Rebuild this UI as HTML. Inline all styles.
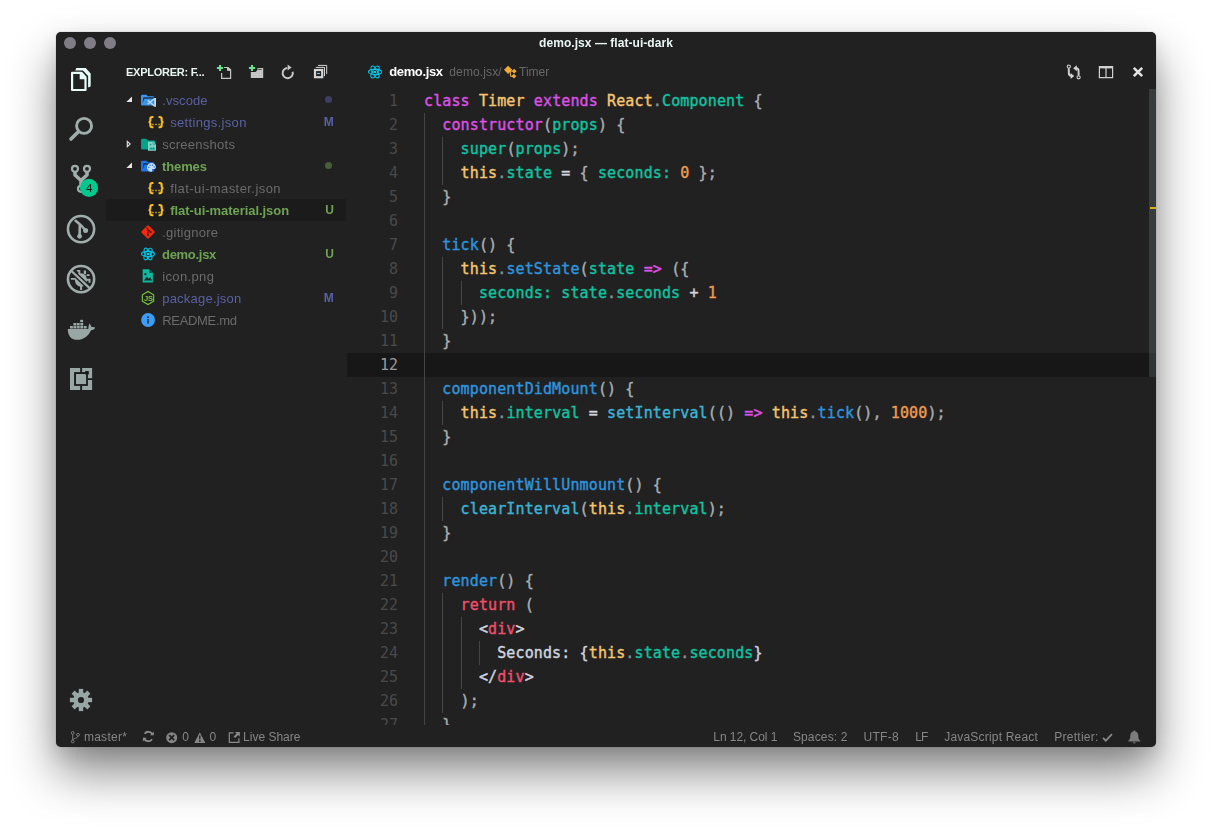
<!DOCTYPE html>
<html lang="en">
<head>
<meta charset="utf-8">
<title>demo.jsx — flat-ui-dark</title>
<style>
*{box-sizing:border-box;margin:0;padding:0}
html,body{width:1212px;height:827px;background:#fff;overflow:hidden}
body{font-family:"Liberation Sans",sans-serif;font-size:13px;color:#ccc;position:relative}
#win{position:absolute;left:56px;top:32px;width:1100px;height:714.5px;background:#212121;border-radius:5px;
 box-shadow:0 0 1px rgba(0,0,0,.5),0 26px 48px rgba(0,0,0,.46),0 8px 18px rgba(0,0,0,.10);overflow:hidden}
.abs{position:absolute}
#title,#act,#side,#tabs,#status{will-change:transform}
#code{background:#212121}
/* title bar */
#title{position:absolute;left:0;top:0;width:1100px;height:22px;text-align:center;line-height:23px;color:#e9f6f3;font-weight:bold;font-size:12px;letter-spacing:.05px}
.tl{position:absolute;top:5px;width:12px;height:12px;border-radius:50%;background:#807d86}
/* activity bar */
#act{position:absolute;left:0;top:22px;width:50px;height:670px}
#act svg{position:absolute}
/* sidebar */
#side{position:absolute;left:50px;top:22px;width:240px;height:670px}
#shead{position:absolute;left:20px;top:8px;height:20px;line-height:20px;font-size:11px;font-weight:bold;color:#e8f4f2;letter-spacing:-.26px}
.row{position:absolute;left:0;width:240px;height:22px;line-height:22px;font-size:13px;color:#6b6b6b;white-space:nowrap}
.row.sel{background:#1b1b1b}
.row .lbl{position:absolute;top:1px}
.row .st{position:absolute;right:12.5px;top:-.5px;font-size:12px;font-weight:bold;text-align:right;letter-spacing:-.3px}
.row svg{position:absolute}
.dot{position:absolute;left:219px;top:6.5px;width:7px;height:7px;border-radius:50%}
.mod{color:#5961a2}.unt{color:#6fa354}.ign{color:#6b6b6b}
/* editor */
#ed{position:absolute;left:291px;top:22px;width:809px;height:671px;overflow:hidden}
#tabs{position:absolute;left:0;top:0;width:809px;height:35px}
#code{position:absolute;left:0;top:35px;width:809px;height:636px;overflow:hidden;font-family:"DejaVu Sans Mono","Liberation Mono",monospace;font-size:15px}
.ln{position:absolute;left:0;width:809px;height:24px;line-height:24px;white-space:pre}
.ln .n{position:absolute;left:0;top:0;width:51px;text-align:right;color:#4a4a4a}
.ln .c{position:absolute;left:77px;top:0;color:#a9afb2;letter-spacing:.12px;-webkit-text-stroke:.4px}
.ln.cur{background:#171717}
.ln.cur .n{color:#9a9a9a}
.d{color:#87939a}.k{color:#dd50e6}.y{color:#f5c56e}.g{color:#10c3a0}.b{color:#2e94de}.cy{color:#3cb3d6}.o{color:#ee9a50}.r{color:#ee4f6a}.w{color:#d0d5de}
.gd{position:absolute;width:1px;background:#454545}
/* status */
#status{position:absolute;left:0;top:694px;width:1100px;height:22px;line-height:22px;font-size:12px;color:#868686;white-space:nowrap}
#status span{position:absolute;top:0}
#status svg{position:absolute}
</style>
</head>
<body>
<div id="win">
  <div id="title">demo.jsx — flat-ui-dark
    <div class="tl" style="left:8px"></div><div class="tl" style="left:28px"></div><div class="tl" style="left:48px"></div>
  </div>
  <div id="act">
<svg style="left:5px;top:5px" width="40" height="40" viewBox="0 0 40 40"><path d="M14.3 11.4 L15.3 9 H24.7 L29.7 14.4 V26.4 Q29.7 28.2 27.8 28.2 H27.1 V16.9 L21.9 11.4 Z" fill="#e6fbf8"/><path d="M12.2 13.8 H20.4 L24.5 18.2 V31 H11.1 V13.8 Z" fill="none" stroke="#e6fbf8" stroke-width="2.2" stroke-linejoin="round"/><path d="M18.7 14 H20.4 L24.5 18.2 V20.3 H18.7Z" fill="#e6fbf8"/></svg>
<svg style="left:5px;top:55px" width="40" height="40" viewBox="0 0 40 40"><circle cx="23.1" cy="16.9" r="7.5" fill="none" stroke="#9fadab" stroke-width="2.9"/><path d="M17.6 22.4 L10 30" stroke="#9fadab" stroke-width="3.6" stroke-linecap="round"/></svg>
<svg style="left:5px;top:105px" width="40" height="40" viewBox="0 0 40 40"><g fill="none" stroke="#9fadab"><circle cx="14" cy="9.800" r="3" stroke-width="2.200"/><circle cx="26" cy="9.800" r="3" stroke-width="2.200"/><circle cx="20" cy="29.800" r="3" stroke-width="2.200"/><path d="M14 13 V16 L20 21.5 L26 16 V13 M20 21 V27" stroke-width="3.6" stroke-linejoin="round"/></g><circle cx="28.05" cy="28.9" r="9.1" fill="#00c98d"/><text x="28.1" y="32.9" font-family="Liberation Sans, sans-serif" font-size="11.5" fill="#101010" text-anchor="middle">4</text></svg>
<svg style="left:5px;top:155px" width="40" height="40" viewBox="0 0 40 40"><circle cx="20.05" cy="20.1" r="13.1" fill="none" stroke="#9fadab" stroke-width="2.6"/><path d="M14.6 11.8 L18.8 15.2 L18.6 27" fill="none" stroke="#9fadab" stroke-width="2.6" stroke-linecap="round" stroke-linejoin="round"/><path d="M19.4 15.6 L24.3 21" stroke="#9fadab" stroke-width="2.4"/><circle cx="18.6" cy="27.3" r="2.4" fill="#9fadab"/><circle cx="24.6" cy="21.6" r="2.5" fill="#9fadab"/></svg>
<svg style="left:5px;top:205px" width="40" height="40" viewBox="0 0 40 40"><g fill="#9fadab"><ellipse cx="20" cy="21" rx="6.1" ry="6.7"/><path d="M17.3 10.9h2v4.5h-2zM15.8 10.9h2v1.6h-2zM22.8 11.6h2.2v3.6h-2.2zM9.9 19.1h6v1.7h-6zM24.2 19.8h5.3v2h-5.3zM27.6 21h1.9v2.8h-1.9zM25.6 15.2h3v1.7h-3zM19.1 26h2v5h-2z"/></g><path d="M10.2 11.8 L28.6 29.1" stroke="#212121" stroke-width="5"/><path d="M10.2 11.8 L28.6 29.1" stroke="#9fadab" stroke-width="2.2"/><circle cx="20.05" cy="20.1" r="13.1" fill="none" stroke="#9fadab" stroke-width="2.6"/></svg>
<svg style="left:5px;top:255px" width="40" height="40" viewBox="0 0 40 40"><g fill="#98a6a4"><path d="M6.8 19.9 H27.3 C27.6 17.5 27.6 16 28.6 14.6 C29.6 16 30.3 17.4 30.6 18.2 C32 17.8 33.2 18 34.2 18.6 C33.6 20.4 32 21.2 30 21.2 C27.6 27 22.5 30.8 16 30.8 C10 30.8 6.8 26.5 6.8 19.9 Z"/><rect x="9" y="17" width="2.9" height="2.5"/><rect x="12.4" y="17" width="2.9" height="2.5"/><rect x="15.8" y="17" width="2.9" height="2.5"/><rect x="19.3" y="17" width="2.9" height="2.5"/><rect x="22.8" y="17" width="2.9" height="2.5"/><rect x="12.4" y="14" width="2.9" height="2.5"/><rect x="15.8" y="14" width="2.9" height="2.5"/><rect x="19.3" y="14" width="2.9" height="2.5"/><rect x="19.2" y="10.8" width="2.9" height="2.4"/></g></svg>
<svg style="left:5px;top:305px" width="40" height="40" viewBox="0 0 40 40"><rect x="9" y="9" width="22.1" height="22" fill="#98a6a4"/><rect x="13.1" y="13.1" width="13.8" height="13.8" fill="#1a1a1a"/><rect x="15" y="15" width="10.1" height="10.1" fill="#98a6a4"/><path d="M19.2 8.5h1.9v4.7h-1.9zM19.2 26.8h1.9v4.7h-1.9zM26.8 19.2h4.8v1.9h-4.8zM24.2 12.1h3.6v3.4h-3.6z" fill="#1a1a1a"/></svg>
<svg style="left:5px;top:626px" width="40" height="40" viewBox="0 0 40 40"><g fill="#98a6a4"><circle cx="20" cy="20" r="7.7"/><rect x="17.8" y="8.9" width="4.4" height="22.2"/><rect x="17.8" y="8.9" width="4.4" height="22.2" transform="rotate(45 20 20)"/><rect x="17.8" y="8.9" width="4.4" height="22.2" transform="rotate(90 20 20)"/><rect x="17.8" y="8.9" width="4.4" height="22.2" transform="rotate(135 20 20)"/></g><circle cx="20" cy="20" r="3.1" fill="#212121"/></svg>
</div>
  <div id="side">
    <div id="shead">EXPLORER: F...</div>
<svg class="abs" style="left:100px;top:0" width="140" height="35" viewBox="100 0 140 35">
<g fill="none" stroke="#c8c8c8" stroke-width="1.2"><path d="M115.6 19v5.4h9v-8.6l-2.6-2.3h-3.9"/><path d="M121.6 13.6v2.6h2.8" /></g><path d="M122 13.5l2.6 2.3v.6h-2.6z" fill="#c8c8c8"/>
<path d="M114 10.9v6.2M110.9 14h6.2" stroke="#6ae38e" stroke-width="2.1"/>
<path d="M144.800 17.900h4.700l2-2v-2h5.700v10.100h-12.400z" fill="#c5c5c5"/><path d="M152.3 15.4h3.3" stroke="#212121" stroke-width=".8"/>
<path d="M146 10.9v6.2M142.9 14h6.2" stroke="#6ae38e" stroke-width="2.1"/>
<path d="M186.63 17.78 A5.1 5.1 0 1 1 181.26 14.02" fill="none" stroke="#c8c8c8" stroke-width="2"/><path d="M181.6 10.6 L185.6 13.4 L181.6 16.6 Z" fill="#c8c8c8"/>
<g fill="none" stroke="#d4d4d4"><path d="M212 11.4h8.7v8.7" stroke-width="1"/><path d="M209.8 13.4h8.7v8.8" stroke-width="1"/><rect x="209" y="16" width="7.2" height="7.2" stroke-width="2.2"/></g><path d="M211 19.5h3" stroke="#75beff" stroke-width="1.2"/>
</svg>
<div class="row" style="top:35px"><svg style="left:0;top:0" width="60" height="22" viewBox="0 0 60 22"><path d="M26 7.400V13H20.300Z" fill="#e4e4e4"/><path d="M35 7q0-1.200 1.200-1.200h4.200l1.400 1.400h5.300q1.100 0 1.100 1.100V16.400H36.200q-1.200 0-1.200-1.200z" fill="#3e96e8"/><path d="M37.300 8.300h10.900v1.500H38.400l-1.900 4.600z" fill="#1a3558"/><path d="M48.100 9h1.900v8.800h-1.900z" fill="#bcd9f6"/><path d="M48.300 9.700L41.700 15.300M48.300 17.100L41.700 11.300" stroke="#bcd9f6" stroke-width="1.300"/></svg><span class="lbl mod" style="left:56.2px;letter-spacing:.09px">.vscode</span><span class="dot" style="background:#3b3f62"></span></div>
<div class="row" style="top:57px"><svg style="left:41px;top:4px" width="18" height="15" viewBox="0 0 18 15"><path d="M6.400 1H5.200Q2.300 1 2.300 3.600V5.200Q2.300 6.600.700 7.100 2.300 7.600 2.300 9V10.600Q2.300 13.200 5.200 13.200H6.400V11.300H5.400Q4.400 11.300 4.400 10.300V8.800Q4.400 7.600 3.400 7.100 4.400 6.600 4.400 5.400V3.900Q4.400 2.900 5.400 2.900H6.400ZM11.600 1H12.800Q15.700 1 15.700 3.600V5.200Q15.700 6.600 17.300 7.100 15.700 7.600 15.700 9V10.600Q15.700 13.200 12.800 13.200H11.600V11.300H12.600Q13.600 11.300 13.600 10.300V8.800Q13.600 7.600 14.600 7.100 13.600 6.600 13.600 5.400V3.900Q13.600 2.900 12.600 2.900H11.600ZM5.300 8.800h1.300v1.400H5.300zM8.350 8.800h1.300v1.400h-1.300zM11.400 8.800h1.300v1.400h-1.300z" fill="#f9bf1c"/></svg><span class="lbl mod" style="left:64.2px;letter-spacing:.33px">settings.json</span><span class="st mod">M</span></div>
<div class="row" style="top:79px"><svg style="left:0;top:0" width="60" height="22" viewBox="0 0 60 22"><path d="M21.300 8.300L24.200 11 21.300 13.700Z" fill="none" stroke="#e4e4e4" stroke-width="1.100"/><path d="M35 7q0-1.200 1.200-1.200h4.100l1.500 1.700h6.200q1.200 0 1.200 1.200v6.500q0 1.200-1.200 1.200H36.200q-1.200 0-1.200-1.200z" fill="#00a28a"/><path d="M42 8.800h5.600l2.400 2.400v6.600H42z" fill="#86d1c3"/><path d="M43 16.600l2-2.600 1.300 1.400 1.300-2 1.600 3.200z" fill="#00a28a"/><circle cx="44.600" cy="11.600" r=".9" fill="#00a28a"/><path d="M47.200 9.200v2.200h2.300" fill="none" stroke="#00a28a" stroke-width=".7"/></svg><span class="lbl ign" style="left:56.2px;letter-spacing:.27px">screenshots</span></div>
<div class="row" style="top:101px"><svg style="left:0;top:0" width="60" height="22" viewBox="0 0 60 22"><path d="M26 7.400V13H20.300Z" fill="#e4e4e4"/><path d="M35 7q0-1.200 1.200-1.200h4.200l1.400 1.400h5.300q1.100 0 1.100 1.100V16.400H36.200q-1.200 0-1.200-1.200z" fill="#1f74e8"/><path d="M37.300 8.300h10.900v1.500H38.400l-1.900 4.600z" fill="#123468"/><path d="M45.400 8.100a4.500 4.300 0 1 0 0 8.600c1.100 0 1-.9.600-1.500-.4-.7.100-1.300.9-1.300h1.300c1 0 1.700-.6 1.700-1.600 0-2.300-2-4.200-4.500-4.200z" fill="#c5defa"/><g fill="#2a7af0"><circle cx="42.800" cy="12.400" r=".75"/><circle cx="44" cy="10.300" r=".75"/><circle cx="46.500" cy="10.200" r=".75"/><circle cx="48.100" cy="12" r=".75"/></g></svg><span class="lbl unt" style="left:56px;letter-spacing:-.12px;font-weight:bold">themes</span><span class="dot" style="background:#45603a"></span></div>
<div class="row" style="top:123px"><svg style="left:41px;top:4px" width="18" height="15" viewBox="0 0 18 15"><path d="M6.400 1H5.200Q2.300 1 2.300 3.600V5.200Q2.300 6.600.700 7.100 2.300 7.600 2.300 9V10.600Q2.300 13.200 5.200 13.200H6.400V11.300H5.400Q4.400 11.300 4.400 10.300V8.800Q4.400 7.600 3.400 7.100 4.400 6.600 4.400 5.400V3.900Q4.400 2.900 5.400 2.900H6.400ZM11.600 1H12.800Q15.700 1 15.700 3.600V5.200Q15.700 6.600 17.300 7.100 15.700 7.600 15.700 9V10.600Q15.700 13.200 12.800 13.200H11.600V11.300H12.600Q13.600 11.300 13.600 10.300V8.800Q13.600 7.600 14.600 7.100 13.600 6.600 13.600 5.400V3.900Q13.600 2.900 12.600 2.900H11.600ZM5.300 8.800h1.300v1.400H5.300zM8.350 8.800h1.300v1.400h-1.300zM11.400 8.800h1.300v1.400h-1.300z" fill="#f9bf1c"/></svg><span class="lbl ign" style="left:64.2px;letter-spacing:.43px">flat-ui-master.json</span></div>
<div class="row sel" style="top:145px"><svg style="left:41px;top:4px" width="18" height="15" viewBox="0 0 18 15"><path d="M6.400 1H5.200Q2.300 1 2.300 3.600V5.200Q2.300 6.600.700 7.100 2.300 7.600 2.300 9V10.600Q2.300 13.200 5.200 13.200H6.400V11.300H5.400Q4.400 11.300 4.400 10.300V8.800Q4.400 7.600 3.400 7.100 4.400 6.600 4.400 5.400V3.900Q4.400 2.900 5.400 2.900H6.400ZM11.600 1H12.800Q15.700 1 15.700 3.600V5.200Q15.700 6.600 17.300 7.100 15.700 7.600 15.700 9V10.600Q15.700 13.200 12.800 13.200H11.600V11.300H12.600Q13.600 11.300 13.600 10.300V8.800Q13.600 7.600 14.600 7.100 13.600 6.600 13.600 5.400V3.900Q13.600 2.900 12.600 2.900H11.600ZM5.300 8.800h1.300v1.400H5.300zM8.350 8.800h1.300v1.400h-1.300zM11.400 8.800h1.300v1.400h-1.300z" fill="#f9bf1c"/></svg><span class="lbl unt" style="left:64.2px;letter-spacing:-.05px;font-weight:bold">flat-ui-material.json</span><span class="st unt">U</span></div>
<div class="row" style="top:167px"><svg style="left:34px;top:3px" width="16" height="16" viewBox="0 0 16 16"><rect x="2.900" y="2.900" width="10.200" height="10.200" rx="1.200" fill="#f4290d" transform="rotate(45 8 8)"/><g stroke="#5a1408" stroke-width="1.1" fill="none"><path d="M6.4 3.600L8 5.200V11M8.200 5.600L10.400 7.800"/></g><circle cx="8" cy="11" r="1" fill="#4a1006"/><circle cx="10.600" cy="8" r="1" fill="#4a1006"/></svg><span class="lbl ign" style="left:56.2px;letter-spacing:.27px">.gitignore</span></div>
<div class="row" style="top:189px"><svg style="left:34px;top:3px" width="16" height="16" viewBox="0 0 16 16"><g fill="none" stroke="#00c4e6" stroke-width="1.1"><ellipse cx="8" cy="8" rx="6.500" ry="2.600"/><ellipse cx="8" cy="8" rx="6.500" ry="2.600" transform="rotate(60 8 8)"/><ellipse cx="8" cy="8" rx="6.500" ry="2.600" transform="rotate(120 8 8)"/></g><circle cx="8" cy="8" r="1.300" fill="#00d4f6"/></svg><span class="lbl unt" style="left:56px;letter-spacing:-.29px;font-weight:bold">demo.jsx</span><span class="st unt">U</span></div>
<div class="row" style="top:211px"><svg style="left:34px;top:2px" width="16" height="16" viewBox="0 0 16 16"><path d="M2.700 2.200h6.300l3.900 3.900v9.400H2.700z" fill="#10b8a0"/><path d="M9 2.200v3.900h3.900z" fill="#0a5a50"/><path d="M3.800 13.400l3-3.600 2 2 1.400-1.600 1.800 3.200z" fill="#1a2a28"/><circle cx="5.400" cy="7.200" r="1.100" fill="#1a2a28"/></svg><span class="lbl ign" style="left:56.2px;letter-spacing:.36px">icon.png</span></div>
<div class="row" style="top:233px"><svg style="left:34px;top:3px" width="16" height="16" viewBox="0 0 16 16"><path d="M8 1.450L13.670 4.720V11.280L8 14.550L2.330 11.280V4.720Z" fill="none" stroke="#7ac943" stroke-width="1.100"/><text x="8.300" y="10.600" font-family="Liberation Sans, sans-serif" font-size="7.500" font-weight="bold" fill="#7ac943" text-anchor="middle" letter-spacing="-.4">JS</text></svg><span class="lbl mod" style="left:56.2px;letter-spacing:.22px">package.json</span><span class="st mod">M</span></div>
<div class="row" style="top:255px"><svg style="left:34px;top:3px" width="16" height="16" viewBox="0 0 16 16"><circle cx="8.050" cy="8" r="6.900" fill="#3d9cf5"/><path d="M7.200 7h1.700v4.600H7.200zM7.200 4.300h1.700v1.700H7.200z" fill="#173a5c"/></svg><span class="lbl ign" style="left:56.2px;letter-spacing:-.31px">README.md</span></div>
  </div>
  <div id="ed">
    <div class="abs" style="left:802px;top:35px;width:7px;height:288px;background:rgba(140,160,165,.21);z-index:3"></div><div class="abs" style="left:803px;top:153px;width:6px;height:2px;background:#d4b21f;z-index:4"></div>
<div id="tabs">
<svg class="abs" style="left:20px;top:10px" width="16" height="16" viewBox="0 0 16 16"><g fill="none" stroke="#00c4e6" stroke-width="1.1"><ellipse cx="8" cy="8" rx="6.600" ry="2.600"/><ellipse cx="8" cy="8" rx="6.600" ry="2.600" transform="rotate(60 8 8)"/><ellipse cx="8" cy="8" rx="6.600" ry="2.600" transform="rotate(120 8 8)"/></g><circle cx="8" cy="8" r="1.3" fill="#00d4f6"/></svg>
<span class="abs" style="left:42.2px;top:8px;line-height:20px;font-size:13px;font-weight:bold;color:#fff;letter-spacing:-.36px">demo.jsx</span>
<span class="abs" style="left:102.3px;top:8px;line-height:20px;font-size:12px;color:#686868;letter-spacing:.13px">demo.jsx/</span>
<svg class="abs" style="left:156px;top:10px" width="16" height="16" viewBox="0 0 16 16"><g fill="#f0ac3a"><rect x="2.200" y="2.900" width="5.800" height="5.800" transform="rotate(45 5.100 5.800)"/><rect x="9.500" y="5.500" width="3.400" height="3.400" transform="rotate(45 11.200 7.200)"/><rect x="9.200" y="10.500" width="3.400" height="3.400" transform="rotate(45 10.900 12.200)"/></g><path d="M7 7.200h3M7.400 7.200v5h2.600" fill="none" stroke="#f0ac3a" stroke-width="1"/></svg>
<span class="abs" style="left:172px;top:8px;line-height:20px;font-size:12px;color:#686868">Timer</span>
<svg class="abs" style="left:718px;top:9px" width="18" height="18" viewBox="0 0 18 18"><g fill="none" stroke="#d4d4d4" stroke-width="1.900"><path d="M3.800 5.200v4.600q0 3 2.400 3h.4"/><path d="M13.600 12.600v-4.400q0-3-2.400-3h-.4"/></g><path d="M5.600 9.900l3.600 3-3.600 3z" fill="#d4d4d4"/><path d="M11.800 2.200l-3.600 3 3.600 3z" fill="#d4d4d4"/><g fill="none" stroke="#d4d4d4" stroke-width="1.100"><circle cx="3.800" cy="3.600" r="1.600"/><circle cx="13.600" cy="14.300" r="1.600"/></g></svg>
<svg class="abs" style="left:751px;top:11px" width="16" height="14" viewBox="0 0 16 14"><path d="M1.400 1.500h13.200v11.100H1.400zM8 2.800v9.800" fill="none" stroke="#d0d0d0" stroke-width="1.200"/><path d="M1.400 1h13.200v2.400H1.400z" fill="#d0d0d0"/></svg>
<svg class="abs" style="left:785px;top:12px" width="12" height="12" viewBox="0 0 12 12"><path d="M1.800 1.800l8.400 8.400M10.200 1.800l-8.400 8.400" stroke="#e2e2e2" stroke-width="2.600"/></svg>
</div>
    <div id="code">
<div class="ln" style="top:0"><span class="n">1</span><span class="c"><span class="k">class</span> <span class="y">Timer</span> <span class="k">extends</span> <span class="y">React</span><span class="d">.</span><span class="g">Component</span> {</span></div>
<div class="ln" style="top:24px"><span class="n">2</span><span class="c">  <span class="k">constructor</span>(<span class="g">props</span>) {</span></div>
<div class="ln" style="top:48px"><span class="n">3</span><span class="c">    <span class="g">super</span>(<span class="g">props</span>);</span></div>
<div class="ln" style="top:72px"><span class="n">4</span><span class="c">    <span class="y">this</span><span class="d">.</span><span class="g">state</span> <span class="w">=</span> { <span class="g">seconds:</span> <span class="o">0</span> };</span></div>
<div class="ln" style="top:96px"><span class="n">5</span><span class="c">  }</span></div>
<div class="ln" style="top:120px"><span class="n">6</span><span class="c"></span></div>
<div class="ln" style="top:144px"><span class="n">7</span><span class="c">  <span class="b">tick</span>() {</span></div>
<div class="ln" style="top:168px"><span class="n">8</span><span class="c">    <span class="y">this</span><span class="d">.</span><span class="b">setState</span>(<span class="g">state</span> <span class="k">=&gt;</span> ({</span></div>
<div class="ln" style="top:192px"><span class="n">9</span><span class="c">      <span class="g">seconds:</span> <span class="g">state</span><span class="d">.</span><span class="g">seconds</span> <span class="w">+</span> <span class="o">1</span></span></div>
<div class="ln" style="top:216px"><span class="n">10</span><span class="c">    }));</span></div>
<div class="ln" style="top:240px"><span class="n">11</span><span class="c">  }</span></div>
<div class="ln cur" style="top:264px"><span class="n">12</span><span class="c"></span></div>
<div class="ln" style="top:288px"><span class="n">13</span><span class="c">  <span class="b">componentDidMount</span>() {</span></div>
<div class="ln" style="top:312px"><span class="n">14</span><span class="c">    <span class="y">this</span><span class="d">.</span><span class="g">interval</span> <span class="w">=</span> <span class="cy">setInterval</span>(() <span class="k">=&gt;</span> <span class="y">this</span><span class="d">.</span><span class="b">tick</span>(), <span class="o">1000</span>);</span></div>
<div class="ln" style="top:336px"><span class="n">15</span><span class="c">  }</span></div>
<div class="ln" style="top:360px"><span class="n">16</span><span class="c"></span></div>
<div class="ln" style="top:384px"><span class="n">17</span><span class="c">  <span class="b">componentWillUnmount</span>() {</span></div>
<div class="ln" style="top:408px"><span class="n">18</span><span class="c">    <span class="cy">clearInterval</span>(<span class="y">this</span><span class="d">.</span><span class="g">interval</span>);</span></div>
<div class="ln" style="top:432px"><span class="n">19</span><span class="c">  }</span></div>
<div class="ln" style="top:456px"><span class="n">20</span><span class="c"></span></div>
<div class="ln" style="top:480px"><span class="n">21</span><span class="c">  <span class="b">render</span>() {</span></div>
<div class="ln" style="top:504px"><span class="n">22</span><span class="c">    <span class="r">return</span> (</span></div>
<div class="ln" style="top:528px"><span class="n">23</span><span class="c">      <span class="w">&lt;</span><span class="r">div</span><span class="w">&gt;</span></span></div>
<div class="ln" style="top:552px"><span class="n">24</span><span class="c">        <span class="w">Seconds: {</span><span class="y">this</span><span class="d">.</span><span class="g">state</span><span class="d">.</span><span class="g">seconds</span><span class="w">}</span></span></div>
<div class="ln" style="top:576px"><span class="n">25</span><span class="c">      <span class="w">&lt;/</span><span class="r">div</span><span class="w">&gt;</span></span></div>
<div class="ln" style="top:600px"><span class="n">26</span><span class="c">    );</span></div>
<div class="ln" style="top:624px"><span class="n">27</span><span class="c">  }</span></div>
<div class="gd" style="left:77px;top:24px;height:624px"></div>
<div class="gd" style="left:95px;top:48px;height:48px"></div>
<div class="gd" style="left:95px;top:168px;height:72px"></div>
<div class="gd" style="left:114px;top:192px;height:24px"></div>
<div class="gd" style="left:95px;top:312px;height:24px"></div>
<div class="gd" style="left:95px;top:408px;height:24px"></div>
<div class="gd" style="left:95px;top:504px;height:120px"></div>
<div class="gd" style="left:114px;top:528px;height:72px"></div>
<div class="gd" style="left:132px;top:552px;height:24px"></div>
</div>
  </div>
  <div id="status">
<svg style="left:12px;top:3.500px" width="14" height="14" viewBox="0 0 14 14"><g fill="none" stroke="#7c7c7c" stroke-width="1"><circle cx="4.700" cy="2.900" r="1.400"/><circle cx="4.700" cy="11.500" r="1.400"/><circle cx="10" cy="4.800" r="1.400"/><path d="M4.700 4.300v5.800M10 6.200c0 2.300-5.300 2-5.300 4"/></g></svg>
<span style="left:27.9px;letter-spacing:.28px">master*</span>
<svg style="left:85.500px;top:4px" width="13" height="13" viewBox="0 0 13 13"><g fill="none" stroke="#8a8a8a" stroke-width="1.800"><path d="M10.700 5A4.500 4.500 0 0 0 2.600 3.800"/><path d="M2 8A4.500 4.500 0 0 0 10.100 9.200"/></g><path d="M8 5.300h3.800V1.500zM4.700 7.700H.9v3.800z" fill="#8a8a8a"/></svg>
<svg style="left:110px;top:6px" width="12" height="12" viewBox="0 0 12 12"><circle cx="5.700" cy="5.700" r="5.500" fill="#858585"/><path d="M3.200 3.200l5 5M8.200 3.200l-5 5" stroke="#212121" stroke-width="1.800"/></svg>
<span style="left:126.200px">0</span>
<svg style="left:138px;top:6px" width="12" height="12" viewBox="0 0 12 12"><path d="M5.800 0.300L11.300 10.900H.3z" fill="#858585"/><path d="M5 3.400h1.600l-.3 4.200h-1zM5 8.300h1.600v1.500H5z" fill="#212121"/></svg>
<span style="left:153.400px">0</span>
<svg style="left:172px;top:5px" width="13" height="13" viewBox="0 0 13 13"><path d="M5.500 1.800H1.300v9.600h9.600V7.200" fill="none" stroke="#8a8a8a" stroke-width="1.200"/><path d="M6.900 0.900h4.900v4.900l-1.700-1.700-3 3-1.500-1.500 3-3z" fill="#8a8a8a"/></svg>
<span style="left:187.100px">Live Share</span>
<span style="left:657.300px;letter-spacing:-.06px">Ln 12, Col 1</span>
<span style="left:736.900px;letter-spacing:.15px">Spaces: 2</span>
<span style="left:807.500px;letter-spacing:.3px">UTF-8</span>
<span style="left:859.200px;letter-spacing:-.8px">LF</span>
<span style="left:888.200px;letter-spacing:.2px">JavaScript React</span>
<span style="left:998.300px;letter-spacing:.25px">Prettier:</span>
<svg style="left:1046px;top:7px" width="11" height="9" viewBox="0 0 11 9"><path d="M1 4.800l2.800 2.900L10 1.200" fill="none" stroke="#8a8a8a" stroke-width="1.700"/></svg>
<svg style="left:1072px;top:4px" width="13" height="14" viewBox="0 0 13 14"><path d="M6.300 0.600c.6 0 1 .4 1 1 2 .5 3 2.200 3 4.400 0 2.600.8 3.800 1.900 4.600v.8H.4v-.8c1.100-.8 1.900-2 1.900-4.600 0-2.200 1-3.900 3-4.400 0-.6.400-1 1-1z" fill="#7c7c7c"/><path d="M5 12.200h2.600a1.300 1.300 0 0 1-2.600 0z" fill="#7c7c7c"/></svg>
</div>
</div>
</body>
</html>
